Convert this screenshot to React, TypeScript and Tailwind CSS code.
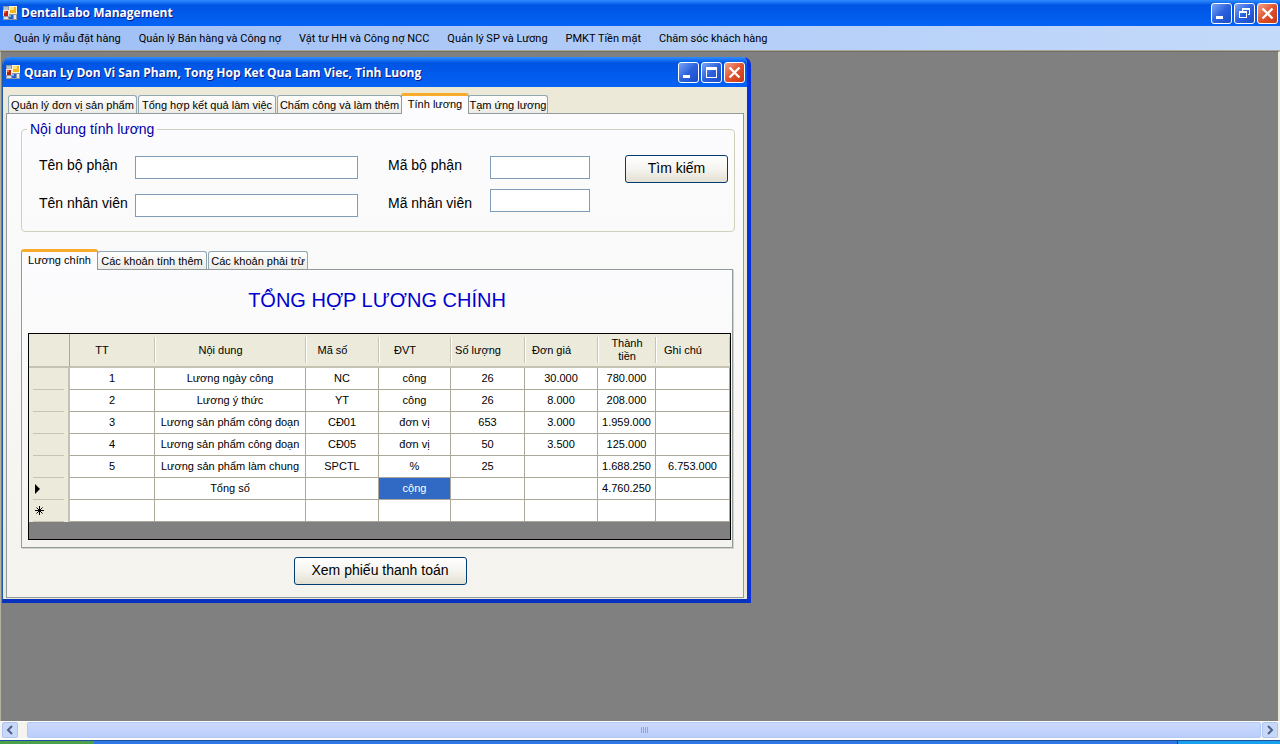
import React from 'react';

const MENU = [
  'Quản lý mẫu đặt hàng',
  'Quản lý Bán hàng và Công nợ',
  'Vật tư HH và Công nợ NCC',
  'Quản lý SP và Lương',
  'PMKT Tiền mặt',
  'Chăm sóc khách hàng',
];

const MAIN_TABS = [
  { label: 'Quản lý đơn vị sản phẩm', width: 'w-[129px]' },
  { label: 'Tổng hợp kết quả làm việc', width: 'w-[138px]' },
  { label: 'Chấm công và làm thêm', width: 'w-[125px]' },
  { label: 'Tính lương', width: 'w-[68px]' },
  { label: 'Tạm ứng lương', width: 'w-[80px]' },
];

const SUB_TABS = [
  { label: 'Lương chính', width: 'w-[77px]' },
  { label: 'Các khoản tính thêm', width: 'w-[110px]' },
  { label: 'Các khoản phải trừ', width: 'w-[100px]' },
];

const COLUMNS = [
  { label: 'TT', width: 'w-[85px]' },
  { label: 'Nội dung', width: 'w-[151px]' },
  { label: 'Mã số', width: 'w-[73px]' },
  { label: 'ĐVT', width: 'w-[72px]' },
  { label: 'Số lượng', width: 'w-[74px]' },
  { label: 'Đơn giá', width: 'w-[73px]' },
  { label: 'Thành tiền', width: 'w-[58px]' },
  { label: 'Ghi chú', width: 'w-[74px]' },
];

const ROWS = [
  ['1', 'Lương ngày công', 'NC', 'công', '26', '30.000', '780.000', ''],
  ['2', 'Lương ý thức', 'YT', 'công', '26', '8.000', '208.000', ''],
  ['3', 'Lương sản phẩm công đoạn', 'CĐ01', 'đơn vị', '653', '3.000', '1.959.000', ''],
  ['4', 'Lương sản phẩm công đoạn', 'CĐ05', 'đơn vị', '50', '3.500', '125.000', ''],
  ['5', 'Lương sản phẩm làm chung', 'SPCTL', '%', '25', '', '1.688.250', '6.753.000'],
  ['', 'Tổng số', '', 'cộng', '', '', '4.760.250', ''],
  ['', '', '', '', '', '', '', ''],
];

function AppIcon() {
  return (
    <svg width="15" height="15" viewBox="0 0 15 15" className="shrink-0" aria-hidden="true">
      <rect x="1" y="0" width="14" height="14" fill="#8d97a8" />
      <rect x="2" y="1" width="4" height="3" fill="#b9c0cc" />
      <rect x="1" y="4" width="6" height="6" fill="#f1e6dc" />
      <rect x="2" y="5" width="4" height="5" fill="#b8200f" />
      <rect x="2" y="5" width="2" height="2" fill="#ee6a4a" />
      <rect x="7" y="0" width="8" height="8" fill="#fff3cf" />
      <rect x="8" y="1" width="6" height="6" fill="#f3b41c" />
      <rect x="8" y="1" width="4" height="3" fill="#fde07c" />
      <rect x="2" y="11" width="4" height="2" fill="#dfe1e4" />
      <rect x="7" y="9" width="4" height="4" fill="#2a5fd0" />
      <rect x="7" y="9" width="2" height="2" fill="#7fb0f5" />
      <rect x="12" y="9" width="2" height="4" fill="#e4e5e6" />
    </svg>
  );
}

type Glyph = 'min' | 'max' | 'restore' | 'close';

function CaptionButton({ glyph, label }: { glyph: Glyph; label: string }) {
  const tone =
    glyph === 'close'
      ? 'bg-linear-to-br from-[#f0a088] via-[#e0512b] to-[#c43a14]'
      : 'bg-linear-to-br from-[#7ba4f6] via-[#2c61dd] to-[#1c4cc8]';
  return (
    <button
      type="button"
      aria-label={label}
      className={`flex h-[21px] w-[21px] items-center justify-center rounded-[3px] border border-white ${tone}`}
    >
      <svg width="19" height="19" viewBox="0 0 19 19" fill="none" aria-hidden="true">
        {glyph === 'min' && <rect x="4" y="12" width="7" height="3" fill="#fff" />}
        {glyph === 'max' && <path d="M4 4h11v11H4zM5 7v7h9V7z" fill="#fff" fillRule="evenodd" />}
        {glyph === 'restore' && (
          <path
            d="M7 4h8v7h-2v-1h1V6H8v1H7zM4 7h8v7H4zM5 9v4h6V9z"
            fill="#fff"
            fillRule="evenodd"
          />
        )}
        {glyph === 'close' && <path d="M4.500 4.500l10 10M14.500 4.500l-10 10" stroke="#fff" strokeWidth="2.300" />}
      </svg>
    </button>
  );
}

function TabStrip({ tabs, active, label }: { tabs: typeof MAIN_TABS; active: number; label: string }) {
  return (
    <div role="tablist" aria-label={label} className="flex h-5 items-end gap-px">
      {tabs.map((tab, i) => (
        <button
          key={tab.label}
          type="button"
          role="tab"
          aria-selected={i === active}
          className={`${tab.width} whitespace-nowrap rounded-t-[3px] border-x text-center text-[11px] ${
            i === active
              ? 'relative z-10 -mx-[2px] -mb-px h-[21px] border-x-[#919b9c] border-t-3 border-t-[#f9ab2b] bg-[#fcfcfe] pb-1 leading-4 first:ml-0'
              : 'h-[18px] border-t border-[#91a7b4] bg-linear-to-b from-white to-[#ecebe6] leading-4'
          }`}
        >
          {tab.label}
        </button>
      ))}
    </div>
  );
}

const INPUT = 'h-[23px] border border-[#7f9db9] bg-white px-1 text-sm outline-none';
const XP_BUTTON =
  'h-7 rounded-[3px] border border-[#003c74] bg-linear-to-b from-white via-[#f5f4ef] to-[#e3e0d2] pb-[2px] text-[14px] leading-5';

function SearchForm() {
  return (
    <fieldset className="ml-[14px] mr-2 h-[112px] rounded border border-[#d0d0bf] pl-[17px] pr-[6px]">
      <legend className="-ml-3 px-[3px] text-[14px] leading-[18px] text-[#0000a8]">Nội dung tính lương</legend>
      <div className="flex items-start pt-[17px] text-[14px]">
        <div className="flex w-24 flex-col gap-[18px] leading-5">
          <label htmlFor="ten-bo-phan">Tên bộ phận</label>
          <label htmlFor="ten-nhan-vien">Tên nhân viên</label>
        </div>
        <div className="flex w-[223px] flex-col gap-[15px] pt-px">
          <input id="ten-bo-phan" className={INPUT} />
          <input id="ten-nhan-vien" className={INPUT} />
        </div>
        <div className="ml-[30px] flex w-[102px] flex-col gap-[18px] leading-5">
          <label htmlFor="ma-bo-phan">Mã bộ phận</label>
          <label htmlFor="ma-nhan-vien">Mã nhân viên</label>
        </div>
        <div className="flex w-[100px] flex-col gap-[10px] pt-px">
          <input id="ma-bo-phan" className={INPUT} />
          <input id="ma-nhan-vien" className={INPUT} />
        </div>
        <button type="button" className={`${XP_BUTTON} ml-[35px] w-[103px]`}>
          Tìm kiếm
        </button>
      </div>
    </fieldset>
  );
}

function RowMarker({ row }: { row: number }) {
  if (row === 5) {
    return (
      <svg width="6" height="10" viewBox="0 0 6 10" aria-hidden="true">
        <path d="M0 0l5 5-5 5z" fill="#000" />
      </svg>
    );
  }
  if (row === 6) {
    return (
      <svg width="9" height="9" viewBox="0 0 9 9" aria-hidden="true">
        <path d="M4.500 0v9M0 4.500h9M1.500 1.500l6 6M7.500 1.500l-6 6" stroke="#000" />
      </svg>
    );
  }
  return null;
}

function SalaryTable() {
  return (
    <div className="ml-[6px] mr-px border border-black bg-[#808080] pb-[17px]">
      <table className="w-full table-fixed border-separate border-spacing-0 text-center text-[11px] leading-[13px]">
        <thead>
          <tr className="h-[34px] bg-[#ebeadb]">
            <th className="w-[41px] border-b-2 border-r border-b-[#c5c2b2] border-r-[#aca899]" aria-label="Dòng" />
            {COLUMNS.map((col, i) => (
              <th
                key={col.label}
                className={`${col.width} border-b-2 border-b-[#c5c2b2] p-0 font-normal`}
              >
                <div
                  className={`flex h-[26px] items-center justify-center border-r border-r-[#c7c5b2] ${
                    i === 6 ? 'px-3' : 'pr-5'
                  } ${i === 0 ? '' : 'border-l border-l-white'}`}
                >
                  {col.label}
                </div>
              </th>
            ))}
          </tr>
        </thead>
        <tbody>
          {ROWS.map((row, r) => (
            <tr key={r} className="h-[22px] bg-white">
              <th className="border-r-2 border-r-[#c5c2b2] bg-[#ebeadb] p-0">
                <div className="mx-1 flex h-[22px] items-center border-b border-b-[#c7c5b2] pl-[2px]">
                  <RowMarker row={r} />
                </div>
              </th>
              {row.map((cell, c) => (
                <td
                  key={c}
                  className={`whitespace-nowrap border-b border-r border-[#aca899] p-0 ${
                    r === 5 && c === 3 ? 'bg-[#316ac5] text-white' : ''
                  }`}
                >
                  {cell}
                </td>
              ))}
            </tr>
          ))}
        </tbody>
      </table>
    </div>
  );
}

function SalaryWindow() {
  return (
    <section
      aria-label="Tính lương"
      className="w-[749px] overflow-hidden rounded-t-lg border-b-4 border-l border-r-4 border-b-[#0831c0] border-l-[#1f56a5] border-r-[#0831d9] bg-[#ece9d8]"
    >
      <header className="flex h-[30px] items-center gap-1 bg-linear-to-b from-[#2f8cff] via-[#0054e3] via-20% to-[#0463f5] pl-[2px] pt-px">
        <AppIcon />
        <h1 className="flex-1 whitespace-nowrap font-['Open_Sans',sans-serif] text-[12px] font-bold text-white [text-shadow:1px_1px_#0a1883]">
          Quan Ly Don Vi San Pham, Tong Hop Ket Qua Lam Viec, Tinh Luong
        </h1>
        <div className="flex gap-[2px] pr-[2px]">
          <CaptionButton glyph="min" label="Thu nhỏ" />
          <CaptionButton glyph="max" label="Phóng to" />
          <CaptionButton glyph="close" label="Đóng" />
        </div>
      </header>
      <div className="px-[3px] pb-px pt-[6px]">
        <div className="pl-[2px]">
          <TabStrip tabs={MAIN_TABS} active={3} label="Chức năng" />
        </div>
        <div className="border border-[#919b9c] bg-linear-to-b from-[#fcfcfe] to-[#f4f3ee] pb-3 pt-[6px]">
          <SearchForm />
          <div className="ml-[14px] mr-[10px] pt-[17px]">
            <TabStrip tabs={SUB_TABS} active={0} label="Bảng lương" />
            <div className="border border-[#919b9c] bg-linear-to-b from-[#fcfcfe] to-[#f4f3ee] pb-[7px] shadow-[1px_1px_#d5d3c8]">
              <h2 className="pb-[19px] pt-[16px] text-center text-[20px] leading-7 text-[#0000d0]">
                TỔNG HỢP LƯƠNG CHÍNH
              </h2>
              <SalaryTable />
            </div>
          </div>
          <div className="mt-[9px] flex justify-center pl-[10px]">
            <button type="button" className={`${XP_BUTTON} w-[173px]`}>
              Xem phiếu thanh toán
            </button>
          </div>
        </div>
      </div>
    </section>
  );
}

function ScrollArrow({ d, label }: { d: string; label: string }) {
  return (
    <button
      type="button"
      aria-label={label}
      className="flex h-4 w-4 items-center justify-center rounded-[2px] border border-[#b0c4f0] bg-[#c8d8fb]"
    >
      <svg width="8" height="10" viewBox="0 0 8 10" fill="none" aria-hidden="true">
        <path d={d} stroke="#4d6185" strokeWidth="2" />
      </svg>
    </button>
  );
}

export default function App() {
  return (
    <div className="flex min-h-screen flex-col bg-[#808080] font-['Liberation_Sans',Arial,sans-serif] text-black">
      <header className="flex h-[26px] items-center gap-1 bg-linear-to-b from-[#2f8cff] via-[#0054e3] via-20% to-[#0463f5] pl-[2px] pr-[2px]">
        <AppIcon />
        <span className="flex-1 whitespace-nowrap font-['Open_Sans',sans-serif] text-[12px] font-bold text-white [text-shadow:1px_1px_#0a1883]">
          DentalLabo Management
        </span>
        <div className="flex gap-[2px]">
          <CaptionButton glyph="min" label="Thu nhỏ" />
          <CaptionButton glyph="restore" label="Khôi phục" />
          <CaptionButton glyph="close" label="Đóng" />
        </div>
      </header>
      <nav className="flex h-[25px] items-center gap-[18px] border-b border-[#aca899] bg-linear-to-r from-[#9ebef5] to-[#c4dafa] pl-[14px] pt-[2px] font-[Roboto,sans-serif] text-[11px]">
        {MENU.map((item) => (
          <button key={item} type="button" className="whitespace-nowrap">
            {item}
          </button>
        ))}
      </nav>
      <main className="flex-1 border-l border-r-2 border-t border-l-[#b5b19f] border-r-[#ece9d8] border-t-[#716f64] pl-px pt-[5px]">
        <SalaryWindow />
      </main>
      <div className="flex h-[19px] items-center gap-px border-b-2 border-t border-[#fdfdfa] bg-[#f4f3ee] px-[2px]">
        <ScrollArrow d="M6 1L2 5l4 4" label="Cuộn trái" />
        <div className="ml-2 flex h-4 flex-1 items-center justify-center gap-px rounded-[2px] border border-[#b4c8f6] bg-linear-to-b from-[#cbdafd] to-[#bacdfb]">
          <span className="h-[6px] w-px bg-[#8ba6e0]" />
          <span className="h-[6px] w-px bg-[#8ba6e0]" />
          <span className="h-[6px] w-px bg-[#8ba6e0]" />
          <span className="h-[6px] w-px bg-[#8ba6e0]" />
        </div>
        <ScrollArrow d="M2 1l4 4-4 4" label="Cuộn phải" />
      </div>
      <footer className="flex h-1 border-t border-t-[#1c4f9c] bg-[#2f76e6]">
        <div className="w-[94px] bg-[#4ba04b]" />
        <div className="flex-1" />
        <div className="w-[103px] border-l border-l-[#0c3a8c] bg-[#18a0ef]" />
      </footer>
    </div>
  );
}
